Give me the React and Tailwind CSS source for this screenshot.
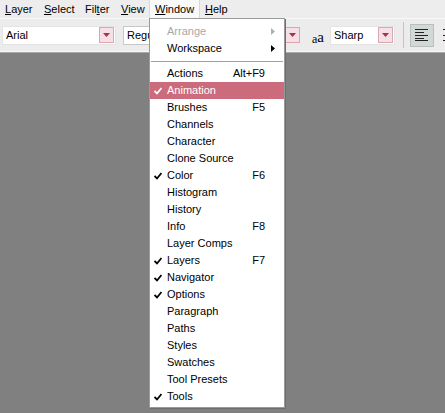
import React from "react";

const F = { fontFamily: '"Liberation Sans", Arial, sans-serif' };

function Arrow() {
  return (
    <div className="shrink-0 w-[15px] h-[16px] bg-[#f6dfe5] border border-[#d9a7b4] flex items-center justify-center">
      <svg width="7" height="4" viewBox="0 0 7 4"><path d="M0 0h7L3.5 4z" fill="#a3344f" /></svg>
    </div>
  );
}

const items = [
  ["Actions", "Alt+F9", false],
  ["Animation", "", true, true],
  ["Brushes", "F5", false],
  ["Channels", "", false],
  ["Character", "", false],
  ["Clone Source", "", false],
  ["Color", "F6", true],
  ["Histogram", "", false],
  ["History", "", false],
  ["Info", "F8", false],
  ["Layer Comps", "", false],
  ["Layers", "F7", true],
  ["Navigator", "", true],
  ["Options", "", true],
  ["Paragraph", "", false],
  ["Paths", "", false],
  ["Styles", "", false],
  ["Swatches", "", false],
  ["Tool Presets", "", false],
  ["Tools", "", true],
];

function Check({ color }) {
  return (
    <svg width="8" height="8" viewBox="0 0 8 8" className="absolute left-[4px] top-[5px]">
      <path d="M0.5 4 L3 6.5 L7.5 1" stroke={color} strokeWidth="1.8" fill="none" />
    </svg>
  );
}

export default function App() {
  return (
    <div className="relative w-[445px] h-[413px] bg-[#808080] overflow-hidden text-[11px] text-black" style={F}>
      {/* menu bar */}
      <div className="h-[18px] bg-[#ededed] flex items-center">
        <span className="w-[39px] pl-[5px]"><u>L</u>ayer</span>
        <span className="w-[41px] pl-[5px]"><u>S</u>elect</span>
        <span className="w-[36px] pl-[5px]">Fil<u>t</u>er</span>
        <span className="w-[33px] pl-[5px]"><u>V</u>iew</span>
        <span className="h-[18px] w-[51px] bg-[#f9f9f9] border-x border-[#d8d8d8] flex items-center pl-[5px]"><u>W</u>indow</span>
        <span className="pl-[5px]"><u>H</u>elp</span>
      </div>
      {/* options bar */}
      <div className="h-[34px] bg-[#ececec] border-y border-[#f8f8f8] shadow-[0_1px_0_#a8a8a8] flex items-center overflow-hidden">
        <div className="shrink-0 ml-[2px] w-[114px] h-[19px] bg-white border border-[#e4e4e4] flex items-center justify-between pl-[3px] pr-[1px]">
          <span>Arial</span>
          <Arrow />
        </div>
        <div className="shrink-0 ml-[7px] w-[80px] h-[19px] bg-white border border-[#c8c8c8] flex items-center pl-[3px]">
          <span>Regular</span>
        </div>
        <div className="shrink-0 ml-[82px] w-[17px] h-[19px] flex items-center">
          <Arrow />
        </div>
        <div className="shrink-0 ml-[10px] w-[16px] flex items-end" style={{ fontFamily: '"Liberation Serif", serif' }}>
          <span className="text-[12px] leading-none -mt-[4px]">a</span>
          <span className="text-[15px] leading-none mt-[4px]">a</span>
        </div>
        <div className="shrink-0 ml-[2px] w-[65px] h-[19px] bg-white border border-[#e4e4e4] flex items-center justify-between pl-[3px] pr-[1px]">
          <span>Sharp</span>
          <Arrow />
        </div>
        <div className="shrink-0 ml-[8px] w-px h-[26px] bg-[#c4c4c4]" />
        <div className="shrink-0 ml-[6px] w-[24px] h-[23px] bg-[#d2d8d6] border border-[#b8c0be] flex items-center justify-center">
          <svg width="14" height="12" viewBox="0 0 14 12">
            <path d="M0 0.5h13M0 3.5h9M0 6.5h13M0 9.5h9M0 11.5h13" stroke="#222" strokeWidth="1" />
          </svg>
        </div>
        <div className="shrink-0 ml-[4px] w-[24px] h-[23px] flex items-center justify-center">
          <svg width="14" height="12" viewBox="0 0 14 12">
            <path d="M0 0.5h13M2 3.5h9M0 6.5h13M2 9.5h9M0 11.5h13" stroke="#222" strokeWidth="1" />
          </svg>
        </div>
      </div>

      {/* dropdown menu */}
      <div className="absolute left-[149px] top-[18px] w-[136px] bg-white border border-[#9a9a9a] shadow-[1px_1px_0_#6e6e6e] pt-[4px] pb-[2px]">
        <div className="relative h-[17px] flex items-center pl-[17px] text-[#a8a8a8]">
          Arrange
          <svg width="4" height="7" viewBox="0 0 4 7" className="absolute right-[9px] top-[5px]"><path d="M0 0L4 3.5L0 7z" fill="#b0b0b0" /></svg>
        </div>
        <div className="relative h-[17px] flex items-center pl-[17px]">
          Workspace
          <svg width="4" height="7" viewBox="0 0 4 7" className="absolute right-[9px] top-[5px]"><path d="M0 0L4 3.5L0 7z" fill="#000" /></svg>
        </div>
        <div className="h-[8px] flex items-center px-[1px]">
          <div className="w-full h-px bg-[#a0a0a0]" />
        </div>
        {items.map(([name, sc, checked, hi]) => (
          <div
            key={name}
            className={
              "relative h-[17px] flex items-center pl-[17px] pr-[19px] justify-between " +
              (hi ? "bg-[#cc6b7b] text-white" : "")
            }
          >
            {checked && <Check color={hi ? "#fff" : "#000"} />}
            <span>{name}</span>
            <span>{sc}</span>
          </div>
        ))}
      </div>
    </div>
  );
}
